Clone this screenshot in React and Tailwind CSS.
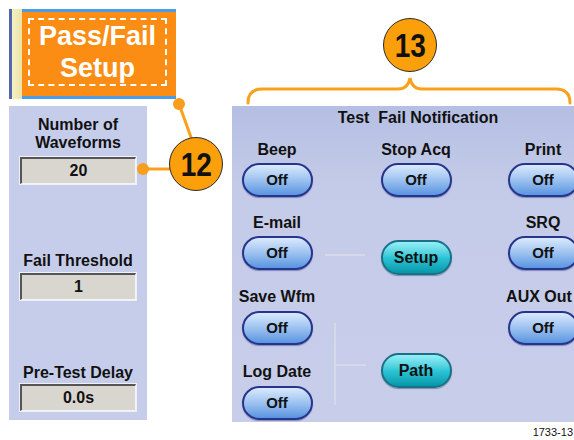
import React from 'react';

const font = { fontFamily: '"Liberation Sans", Arial, sans-serif' };

const OffButton = ({ label = 'Off' }) => (
  <div className="w-[71px] h-[34px] shrink-0 rounded-full border-2 border-[#26358c] bg-linear-to-b from-[#dbe9fc] via-[#9cc2f0] to-[#5a94e0] shadow-[0_1px_1px_rgba(60,70,140,0.5)] flex items-center justify-center text-[15px] font-bold text-[#111]">
    {label}
  </div>
);

const TealButton = ({ label }) => (
  <div className="w-[71px] h-[35px] shrink-0 rounded-full border-2 border-[#1d6f86] bg-linear-to-b from-[#93f0f7] via-[#2cc6d6] to-[#0397ab] shadow-[0_1px_1px_rgba(30,80,110,0.5)] flex items-center justify-center text-[16px] font-bold text-[#111]">
    {label}
  </div>
);

const Label = ({ children, className = '' }) => (
  <div className={`h-[18px] leading-[18px] text-[16px] font-bold text-[#111] whitespace-nowrap text-center ${className}`}>
    {children}
  </div>
);

const ValueBox = ({ value, className = '' }) => (
  <div className={`mx-[11px] h-[27px] bg-[#d9d6cf] border-t-2 border-l-2 border-b border-r border-t-[#555] border-l-[#555] border-b-[#f4f4f4] border-r-[#f4f4f4] ring-1 ring-white/70 flex items-center justify-center text-[16px] font-bold text-[#111] ${className}`}>
    {value}
  </div>
);

const Callout = ({ num, className }) => (
  <div className={`absolute w-[54px] h-[54px] rounded-full bg-[#fb9f0a] border-[1.5px] border-[#2b2b2b] flex items-center justify-center text-[33px] font-bold text-[#111] leading-none ${className}`}>
    <span className="inline-block scale-x-85">{num}</span>
  </div>
);

export default function App() {
  return (
    <div className="relative w-[574px] h-[440px] bg-white overflow-hidden" style={font}>
      {/* top band */}
      <div className="h-[106px] flex">
        <div className="ml-[9px] mt-[9px] w-[167px] h-[90px] flex">
          <div className="w-[3px] bg-[#5566ad]" />
          <div className="w-[10px] bg-linear-to-r from-[#f6f1c4] to-[#e9e3a6]" />
          <div className="flex-1 flex flex-col">
            <div className="h-[3px] bg-[#4a9be8]" />
            <div className="flex-1 bg-[#fb8c14] pl-[6px] pr-[9px] pt-[6px]">
              <div className="h-[68px] border-2 border-dashed border-white flex flex-col items-center text-white font-bold text-[27px] leading-[32px]">
                <span>Pass/Fail</span>
                <span>Setup</span>
              </div>
            </div>
            <div className="h-[3px] bg-[#4a9be8]" />
          </div>
        </div>
      </div>

      {/* panels */}
      <div className="flex">
        <div className="ml-[9px] w-[138px] h-[314px] shrink-0 bg-[#c6cdea] pt-[10px]">
          <Label>Number of</Label>
          <Label>Waveforms</Label>
          <ValueBox value="20" className="mt-[5px] h-[26px]" />
          <Label className="mt-[68px]">Fail Threshold</Label>
          <ValueBox value="1" className="mt-[3px]" />
          <Label className="mt-[64px]">Pre-Test Delay</Label>
          <ValueBox value="0.0s" className="mt-[2px]" />
        </div>

        <div className="relative ml-[85px] w-[342px] h-[316px] shrink-0 overflow-hidden bg-linear-to-b from-[#b5bfe3] via-[#c4cbe8] via-25% to-[#c8ceea] pt-[3px]">
          <Label className="pl-[30px]">Test&nbsp; Fail Notification</Label>
          <svg className="absolute left-0 top-0" width="342" height="316">
            <g stroke="#dcdce8" strokeWidth="1.5" fill="none">
              <line x1="93" y1="149" x2="133" y2="149" />
              <line x1="103" y1="217" x2="103" y2="299" />
              <line x1="103" y1="259" x2="134" y2="259" />
            </g>
          </svg>
          <div className="relative flex">
            <div className="w-[90px] shrink-0 flex flex-col items-center">
              <Label className="mt-[14px]">Beep</Label>
              <div className="mt-[4px]"><OffButton /></div>
              <Label className="mt-[17px]">E-mail</Label>
              <div className="mt-[4px]"><OffButton /></div>
              <Label className="mt-[18px]">Save Wfm</Label>
              <div className="mt-[5px]"><OffButton /></div>
              <Label className="mt-[18px]">Log Date</Label>
              <div className="mt-[5px]"><OffButton /></div>
            </div>
            <div className="ml-[24px] w-[140px] shrink-0 flex flex-col items-center">
              <Label className="mt-[14px]">Stop Acq</Label>
              <div className="mt-[4px]"><OffButton /></div>
              <div className="mt-[43px]"><TealButton label="Setup" /></div>
              <div className="mt-[78px]"><TealButton label="Path" /></div>
            </div>
            <div className="ml-[21px] w-[72px] shrink-0 flex flex-col items-center">
              <Label className="mt-[14px]">Print</Label>
              <div className="mt-[4px]"><OffButton /></div>
              <Label className="mt-[17px]">SRQ</Label>
              <div className="mt-[4px]"><OffButton /></div>
              <Label className="mt-[18px] mr-[8px]">AUX Out</Label>
              <div className="mt-[5px]"><OffButton /></div>
            </div>
          </div>
        </div>
      </div>

      <div className="flex justify-end mt-[4px] pr-[1px] text-[11px] leading-[13px] text-[#111]">1733-13</div>

      {/* callout drawing */}
      <svg className="absolute left-0 top-0 pointer-events-none" width="574" height="440">
        <g stroke="#f9a11b" strokeWidth="3" fill="none" strokeLinecap="round">
          <path d="M248,103 Q248,89 262,89 L398,89 Q408,89 410,78 Q412,89 422,89 L556,89 Q570,89 570,103" />
          <line x1="179" y1="104" x2="192" y2="140" />
          <line x1="143" y1="169" x2="171" y2="169" />
        </g>
        <circle cx="179" cy="104" r="6" fill="#f99d1c" />
        <circle cx="143" cy="169" r="6" fill="#f99d1c" />
      </svg>
      <Callout num="12" className="left-[169px] top-[137px]" />
      <Callout num="13" className="left-[383px] top-[18px]" />
    </div>
  );
}
